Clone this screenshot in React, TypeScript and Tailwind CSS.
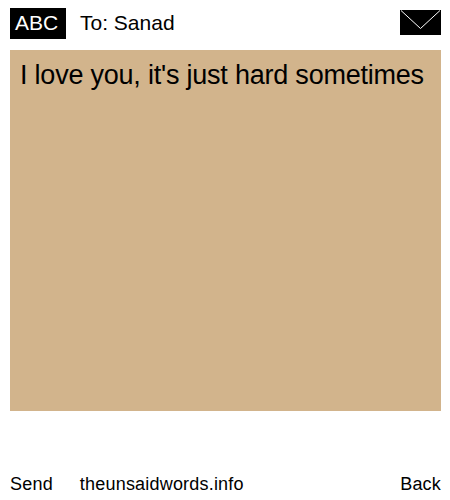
export default function App() {
  return (
    <div className="w-[450px] h-[500px] bg-white flex flex-col pl-[10px] pr-[9px] text-black font-['Liberation_Sans',Arial,sans-serif]">
      <div className="h-[50px] flex items-start pt-[8px]">
        <div className="w-[56px] h-[31px] bg-black text-white text-[21px] leading-[30px] flex justify-center pr-[3px]">ABC</div>
        <div className="ml-[14px] text-[21px] leading-[30px] flex-1">To: Sanad</div>
        <svg width="41" height="25" viewBox="0 0 41 25" className="block mt-[2px]">
          <rect width="41" height="25" fill="#000" />
          <path d="M1 0.5 L20.5 18.5 L40 0.5" stroke="#fff" strokeWidth="1" fill="none" />
        </svg>
      </div>
      <div className="h-[361px] bg-[#d2b48c] pl-[10px] pt-[7px] text-[27px] tracking-[-0.22px] leading-[36px] whitespace-nowrap">I love you, it's just hard sometimes</div>
      <div className="mt-[61px] flex text-[18px] tracking-[0.2px] leading-[24px] items-center">
        <span>Send</span>
        <span className="ml-[27px] flex-1">theunsaidwords.info</span>
        <span>Back</span>
      </div>
    </div>
  );
}
